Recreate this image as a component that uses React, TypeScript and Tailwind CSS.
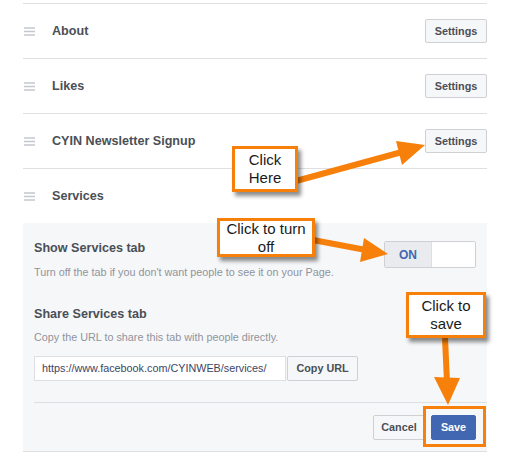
import React from "react";

const ORANGE = "#f7800a";

const DragIcon = () => (
  <svg width="11" height="9" viewBox="0 0 11 9" className="ml-[1px] shrink-0">
    <path d="M0 1h11M0 4.5h11M0 8h11" stroke="#c4c7cd" strokeWidth="1.4" />
  </svg>
);

const SettingsButton = () => (
  <button className="h-[24px] w-[62px] rounded-[2px] border border-[#ced0d4] bg-[#f6f7f9] text-[10.8px] font-bold text-[#4b4f56]">
    Settings
  </button>
);

const TabRow = ({ label, last }: { label: string; last?: boolean }) => (
  <div
    className={
      last
        ? "flex h-[54px] items-center"
        : "flex h-[55px] items-center border-b border-[#dddfe2]"
    }
  >
    <DragIcon />
    <span className="ml-[17px] flex-1 text-[12.6px] font-bold text-[#4b4f56]">{label}</span>
    {!last && <SettingsButton />}
  </div>
);

const Callout = ({ className, lines }: { className: string; lines: string[] }) => (
  <div
    className={
      "absolute flex flex-col items-center justify-center border-[3px] border-[#f7800a] bg-white text-[15px] leading-[18px] text-[#1a1a1a] shadow-[3px_4px_4px_rgba(0,0,0,0.45)] " +
      className
    }
  >
    {lines.map((l) => (
      <span key={l}>{l}</span>
    ))}
  </div>
);

export default function App() {
  return (
    <div className="relative h-[464px] w-[518px] overflow-hidden bg-white font-['Liberation_Sans',Arial,sans-serif]">
      <div className="ml-[23px] w-[464px] pt-[3px]">
        {/* tab list */}
        <div className="border-t border-[#dddfe2]">
          <TabRow label="About" />
          <TabRow label="Likes" />
          <TabRow label="CYIN Newsletter Signup" />
          <TabRow label="Services" last />
        </div>

        {/* services settings panel */}
        <div className="border-b border-[#dddfe2] bg-[#f6f7f9] px-[11px] pt-[17px]">
          <div className="flex items-start justify-between">
            <div>
              <div className="text-[12.6px] font-bold leading-[16px] text-[#4b4f56]">Show Services tab</div>
              <div className="mt-[8px] text-[10.8px] leading-[16px] text-[#90949c]">
                Turn off the tab if you don't want people to see it on your Page.
              </div>
            </div>
            <div className="mt-[1px] flex h-[27px] w-[92px] overflow-hidden rounded-[2px] border border-[#ced0d4]">
              <div className="flex w-[47px] items-center justify-center border-r border-[#dddfe2] bg-[#e9ebee] text-[12px] font-bold text-[#4267b2]">
                ON
              </div>
              <div className="flex-1 bg-white" />
            </div>
          </div>

          <div className="mt-[26px] text-[12.6px] font-bold leading-[16px] text-[#4b4f56]">Share Services tab</div>
          <div className="mt-[7px] text-[10.8px] leading-[16px] text-[#90949c]">
            Copy the URL to share this tab with people directly.
          </div>

          <div className="mt-[11px] flex items-center">
            <div className="flex h-[25px] w-[252px] items-center border border-[#dddfe2] bg-white pl-[7px] text-[10.8px] text-[#3b4566]">
              https://www.facebook.com/CYINWEB/services/
            </div>
            <button className="ml-[1px] h-[25px] w-[71px] rounded-[2px] border border-[#ced0d4] bg-[#f6f7f9] text-[10.8px] font-bold text-[#4b4f56]">
              Copy URL
            </button>
          </div>

          <div className="mr-[-11px] mt-[21px] border-t border-[#dddfe2]" />

          <div className="flex justify-end gap-[6px] pb-[11px] pt-[12px]">
            <button className="h-[25px] w-[52px] rounded-[2px] border border-[#ced0d4] bg-[#f6f7f9] text-[10.8px] font-bold text-[#4b4f56]">
              Cancel
            </button>
            <button className="h-[25px] w-[45px] rounded-[2px] border border-[#4267b2] bg-[#4267b2] text-[10.8px] font-bold text-white">
              Save
            </button>
          </div>
        </div>
      </div>

      {/* highlight around Save */}
      <div className="absolute left-[423px] top-[406px] h-[41px] w-[63px] border-[3px] border-[#f7800a]" />

      {/* arrows */}
      <svg className="pointer-events-none absolute left-0 top-0" width="518" height="464">
        <g fill={ORANGE} stroke={ORANGE}>
          <line x1="296" y1="181" x2="402" y2="152" strokeWidth="6" />
          <polygon points="425,145 396,141 402,165" stroke="none" />
          <line x1="313" y1="240" x2="366" y2="250" strokeWidth="6" />
          <polygon points="388,254 364,238 360,262" stroke="none" />
          <line x1="445" y1="338" x2="447" y2="382" strokeWidth="6" />
          <polygon points="448,405 434,377 460,378" stroke="none" />
        </g>
      </svg>

      <Callout className="left-[232px] top-[146px] h-[46px] w-[66px]" lines={["Click", "Here"]} />
      <Callout className="left-[217px] top-[218px] h-[39px] w-[98px]" lines={["Click to turn", "off"]} />
      <Callout className="left-[406px] top-[292px] h-[46px] w-[80px]" lines={["Click to", "save"]} />
    </div>
  );
}
